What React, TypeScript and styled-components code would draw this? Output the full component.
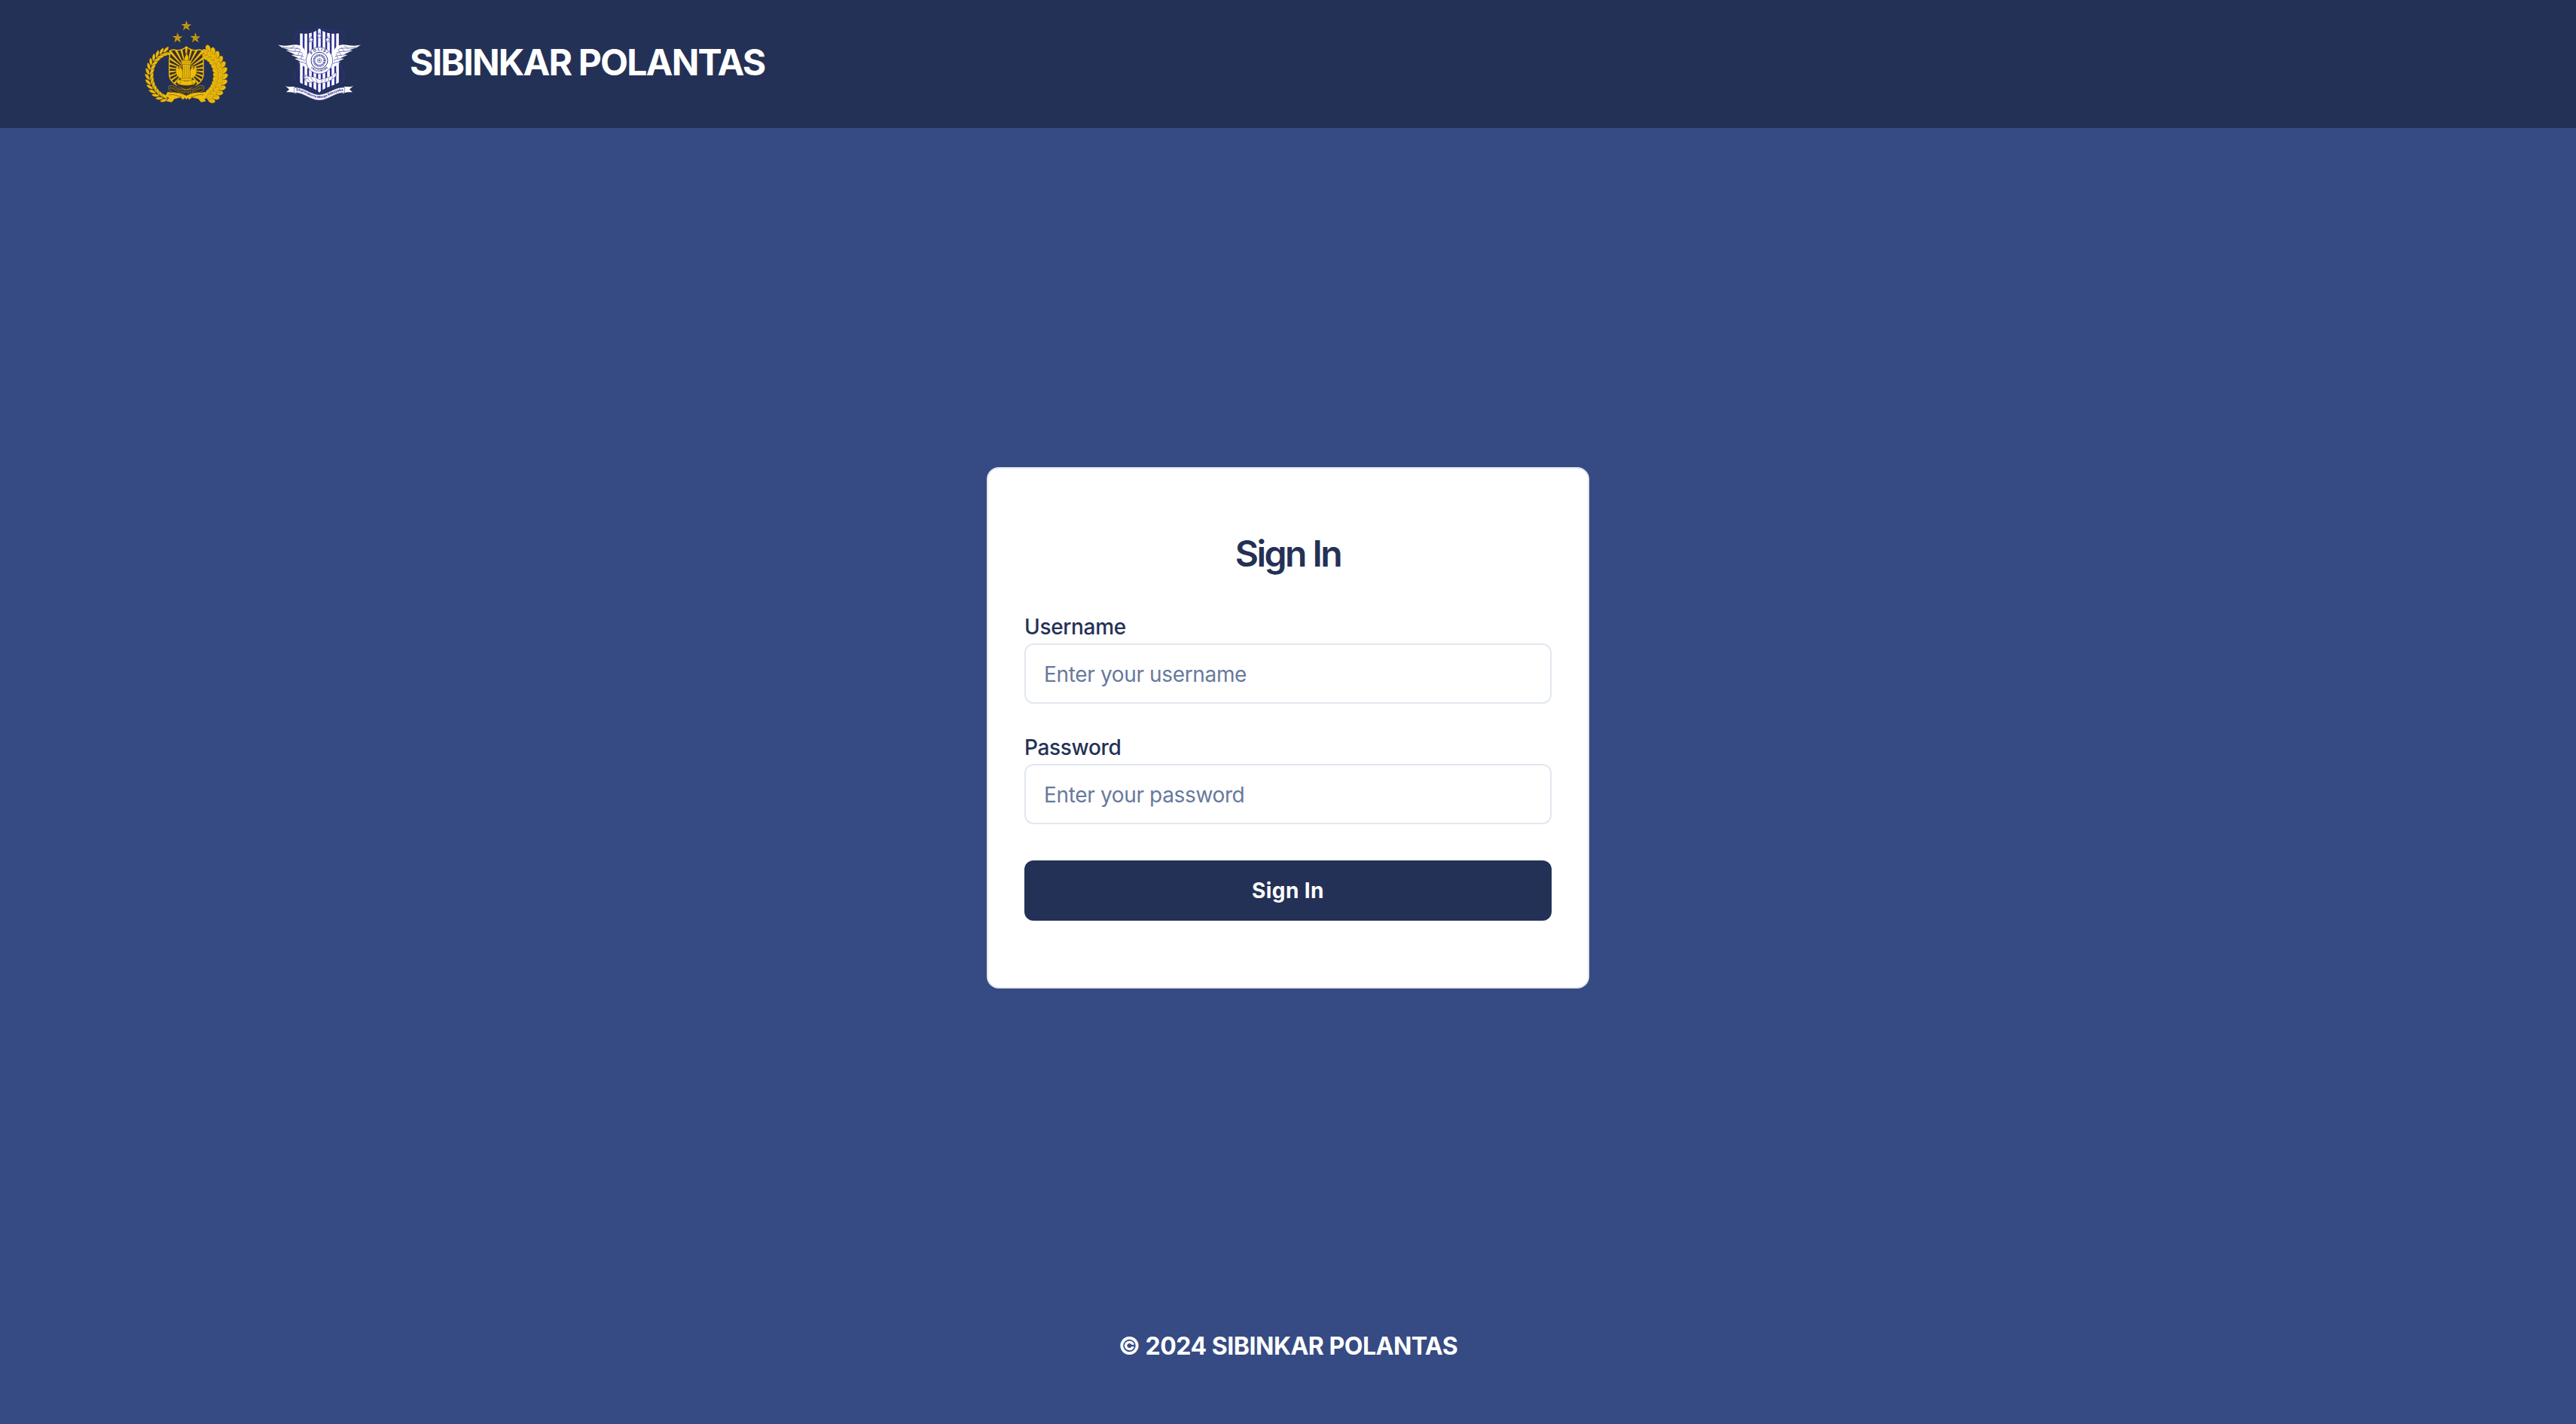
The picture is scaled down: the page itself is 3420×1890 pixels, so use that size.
import styled, { createGlobalStyle } from "styled-components";

const GOLD = "#eebb08";
const BRONZE = "#3a3029";
const INDIGO = "#2e3192";

const STAR = "M0-21 5-7 20-6 8 3 13 18 0 9-13 18-8 3-20-6-5-7Z";
const STAR_SHADE = "M0 0 0-21-5-7ZM0 0 20-6 5-7ZM0 0 13 18 8 3ZM0 0-13 18 0 9ZM0 0-20-6-8 3Z";
const POLRI_SHIELD = "M202 126C190 137 176 142 160 139C151 137 143 138 135 143C140 156 134 166 134 180V236C134 266 160 280 202 297C244 280 270 266 270 236V180C270 166 264 156 269 143C261 138 253 137 244 139C228 142 214 137 202 126Z";
const TRAFFIC_SHIELD = "M192 26C178 42 152 54 124 47C112 46 106 48 104 54C102 64 96 70 89 74C100 86 110 96 112 116V178C108 196 94 204 93 222C94 248 100 262 116 268C146 274 174 282 192 302C210 282 238 274 268 268C284 262 290 248 291 222C290 204 276 196 272 178V116C274 96 284 86 295 74C288 70 282 64 280 54C278 48 272 46 260 47C232 54 206 42 192 26Z";

// Leaf positions from the top of a wreath to its foot, each turned towards the tip
const placeLeaves = (cx: number, radius: number, from: number, step: number, count: number) =>
	Array.from({ length: count }, (_, i) => {
		const angle = ((from + i * step) * Math.PI) / 180;
		const dir = Math.sign(step);
		return {
			x: cx + radius * Math.cos(angle),
			y: 240 - 95 * Math.sin(angle),
			turn: (Math.atan2(dir * 95 * Math.cos(angle), dir * radius * Math.sin(angle)) * 180) / Math.PI,
		};
	});

const riceLeaves = placeLeaves(138, 82, 106, 11.8, 14);
const cottonLeaves = placeLeaves(262, 76, 70, -12.6, 12);

const PolriLogo = () => (
	<StyledLogo viewBox="36 18 336 336">
		<defs>
			<clipPath id="polriShield">
				<path d={POLRI_SHIELD} />
			</clipPath>
		</defs>
		{[[202, 43], [167, 91], [238, 91]].map(([x, y]) => (
			<g key={x} transform={`translate(${x} ${y})`}>
				<path d={STAR} fill={GOLD} />
				<path d={STAR_SHADE} fill={BRONZE} opacity=".55" />
			</g>
		))}
		{riceLeaves.map(({ x, y, turn }, i) => (
			<g key={i} transform={`translate(${x} ${y}) rotate(${turn})`} fill={GOLD} stroke={BRONZE} strokeWidth="1">
				<path d="M-5 0C-2-10 8-18 23-17C20-5 11 0-5 0Z" />
				<path d="M-5 0C-2 10 8 18 23 17C20 5 11 0-5 0Z" />
			</g>
		))}
		<path d="M268 136C290 133 306 144 318 160C336 180 350 208 352 236C352 272 338 300 312 318C298 328 284 332 274 334L270 320C282 308 292 298 300 286C308 268 316 254 314 238C312 210 302 188 288 174C278 164 268 152 268 136Z" fill={GOLD} />
		{cottonLeaves.map(({ x, y, turn }, i) => (
			<g key={i} transform={`translate(${x} ${y}) rotate(${turn})`} fill={GOLD} stroke="#94761a" strokeWidth="1.1">
				<path d="M-6-2C-8-16 0-30 14-30C24-22 18-6-6-2L12-20" />
				<path d="M-6 2C-8 16 0 29 14 29C24 22 18 6-6 2L12 19" />
				<path d="M-8 0C-2-12 12-13 24 0C12 13-2 12-8 0H14" />
			</g>
		))}
		<path d={POLRI_SHIELD} fill={BRONZE} stroke={GOLD} strokeWidth="4" />
		<g clipPath="url(#polriShield)" fill={GOLD}>
			{Array.from({ length: 26 }, (_, i) => (
				<path key={i} d="M-1-20-6-120H6L1-20Z" transform={`translate(202 218) rotate(${i * (360 / 26)})`} />
			))}
		</g>
		<path d="M160 274Q202 286 244 274L236 284 202 297 168 284Z" fill={BRONZE} />
		<path d="M196 182C186 172 204 164 200 150C214 164 214 172 208 182Z" fill={GOLD} stroke={BRONZE} strokeWidth="2" />
		<path d="M188 256C162 248 154 226 165 199L174 216 174 198 188 222ZM216 256C242 248 250 226 239 199L230 216 230 198 216 222Z" fill={GOLD} stroke={BRONZE} strokeWidth="1" />
		<g fill={GOLD} stroke="#7d6414" strokeWidth="1.5">
			<path d="M181 181H223L220 196H184Z" />
			<path d="M187 196H217V253H187Z" />
			<path d="M180 252H224V261H180Z" />
			<path d="M171 259C181 255 188 263 202 263S223 255 233 259V275Q202 285 171 275Z" />
			<circle cx="172" cy="265" r="8" />
			<circle cx="232" cy="265" r="8" />
			<path d="M194 200V250M202 200V250M210 200V250M184 188H220" fill="none" />
		</g>
		<path d="M134 282C146 278 158 284 166 292C184 300 220 300 238 292C246 284 258 278 270 282C276 290 272 300 262 305C240 315 228 305 202 322C176 305 164 315 142 305C132 300 128 290 134 282Z" fill={BRONZE} stroke={GOLD} strokeWidth="1.5" />
		<path d="M138 291C158 288 168 311 202 306C236 311 246 288 266 291" fill="none" stroke={GOLD} strokeWidth="7" strokeDasharray="3 2 2 3" opacity=".5" />
		<path d="M128 305C146 313 164 302 202 322C240 302 258 313 276 305L286 322 272 330 280 343 261 347 250 334 225 328 213 337 207 329 202 337 196 329 189 337 179 328 155 334 144 347 122 343 133 330 119 322Z" fill={GOLD} />
		<path d="M132 318C156 312 170 326 184 325M272 318C248 312 234 326 220 325" fill="none" stroke={BRONZE} strokeWidth="1.5" />
	</StyledLogo>
);

const TrafficWing = () => (
	<g>
		<path d="M26 103C52 112 78 104 98 103C116 104 128 112 134 126L146 146C140 164 144 184 156 202C140 194 136 190 132 190L118 184 126 181 108 173 118 170 94 159 107 156 80 144 94 142 60 126 72 124 43 114Z" fill="#fff" />
		<path d="M46 112C74 122 96 111 116 122M64 124C88 134 104 124 124 137M84 142C102 147 114 142 130 152M98 156C112 161 120 157 135 166M112 171C122 174 130 171 138 180" fill="none" stroke={INDIGO} strokeWidth="2" />
		<path d="M94 108C82 112 80 116 76 121M106 113C98 119 96 126 92 132M118 123C111 130 109 138 106 146M126 139C122 146 120 152 119 159" fill="none" stroke={INDIGO} strokeWidth="1.5" />
	</g>
);

const TrafficLogo = () => (
	<StyledLogo viewBox="24 3 336 336">
		<defs>
			<clipPath id="trafficShield">
				<path d="M192 38C174 54 148 62 112 58V250C116 262 174 272 192 294C210 272 268 262 272 250V58C236 62 210 54 192 38Z" />
			</clipPath>
			<path id="badgeTop" d="M154 165A38 38 0 0 1 230 165" />
			<path id="badgeBottom" d="M147 165A45 45 0 0 0 237 165" />
			<path id="mottoCurve" d="M94 288C122 281 158 316 192 316S262 281 292 288" />
		</defs>
		<path d={TRAFFIC_SHIELD} fill="#243156" stroke={INDIGO} strokeWidth="3" />
		<g clipPath="url(#trafficShield)">
			<path d="M112 30H272V300H112Z" fill={INDIGO} />
			{Array.from({ length: 9 }, (_, i) => (
				<rect key={i} x={115 + i * 18} y="30" width="10.5" height="270" fill="#fff" />
			))}
		</g>
		{[[192, 68], [159, 83], [225, 83]].map(([x, y]) => (
			<path key={x} d={STAR} transform={`translate(${x} ${y}) scale(.6)`} fill="#fff" stroke={INDIGO} strokeWidth="3" />
		))}
		<g fill="#fff" stroke={INDIGO} strokeWidth="1.5">
			<path d="M126 219L150 230 172 232 192 242 214 238 238 229 260 213 257 229 240 243 218 252 192 258 170 251 146 253 132 242 143 239 124 232 138 230Z" />
			<path d="M142 232L153 248M158 234L169 250M176 239L184 253M203 243L200 255M217 240L214 251M230 235L228 247M244 228L242 240" fill="none" />
		</g>
		<TrafficWing />
		<g transform="translate(384 0) scale(-1 1)">
			<TrafficWing />
		</g>
		<circle cx="192" cy="166" r="53" fill="#fff" stroke={INDIGO} strokeWidth="2" />
		<circle cx="192" cy="166" r="33" fill="#fff" stroke={INDIGO} strokeWidth="3" />
		<circle cx="192" cy="166" r="21" fill="none" stroke={INDIGO} strokeWidth="9" strokeDasharray="3 2.5" />
		<circle cx="192" cy="166" r="8" fill="#fff" stroke={INDIGO} strokeWidth="2" />
		<circle cx="192" cy="166" r="3" fill={INDIGO} />
		<StyledBadgeText>
			<textPath href="#badgeTop" startOffset="50%" textAnchor="middle">POLISI</textPath>
		</StyledBadgeText>
		<StyledBadgeText $small>
			<textPath href="#badgeBottom" startOffset="50%" textAnchor="middle">LALU LINTAS</textPath>
		</StyledBadgeText>
		<path d="M57 267C70 274 82 268 94 271V290L101 299C84 291 72 292 60 292L72 281ZM327 267C314 274 302 268 290 271V290L283 299C300 291 312 292 324 292L312 281Z" fill="#fff" />
		<path d="M91 274C126 268 158 303 192 302S258 268 293 274V294C260 290 226 324 192 324S124 290 91 294Z" fill="#fff" stroke={INDIGO} strokeWidth="1.5" />
		<StyledMotto>
			<textPath href="#mottoCurve" startOffset="50%" textAnchor="middle">Dharmakerta Marga Raksyaka</textPath>
		</StyledMotto>
	</StyledLogo>
);

const App = () => {
	return (
		<StyledPage>
			<GlobalStyle />
			<StyledHeader>
				<PolriLogo />
				<TrafficLogo />
				<StyledBrand>SIBINKAR POLANTAS</StyledBrand>
			</StyledHeader>
			<StyledMain>
				<StyledCard onSubmit={(event) => event.preventDefault()}>
					<StyledTitle>Sign In</StyledTitle>
					<StyledField>
						<StyledLabel htmlFor="username">Username</StyledLabel>
						<StyledInput id="username" placeholder="Enter your username" />
					</StyledField>
					<StyledField>
						<StyledLabel htmlFor="password">Password</StyledLabel>
						<StyledInput id="password" type="password" placeholder="Enter your password" />
					</StyledField>
					<StyledButton type="submit">Sign In</StyledButton>
				</StyledCard>
			</StyledMain>
			<StyledFooter>© 2024 SIBINKAR POLANTAS</StyledFooter>
		</StyledPage>
	);
};

export default App;

const GlobalStyle = createGlobalStyle`
	* {
		box-sizing: border-box;
	}

	body {
		margin: 0;
		font-family: Inter, sans-serif;
	}
`;

const StyledPage = styled.div`
	display: flex;
	flex-direction: column;
	height: 100vh;
	background: #364b83;
`;

const StyledHeader = styled.header`
	display: flex;
	align-items: center;
	gap: 64px;
	height: 170px;
	padding: 26px 192px 32px;
	background: #243156;
`;

const StyledLogo = styled.svg`
	flex: none;
	width: 112px;
	height: 112px;
`;

const StyledBadgeText = styled.text<{ $small?: boolean }>`
	fill: ${INDIGO};
	font-size: ${({ $small }) => ($small ? 11 : 15)}px;
	font-weight: 700;
	letter-spacing: ${({ $small }) => ($small ? 0.5 : 4)}px;
`;

const StyledMotto = styled.text`
	fill: ${INDIGO};
	font-size: 13.5px;
	font-weight: 700;
`;

const StyledBrand = styled.h1`
	margin: 0;
	padding-top: 1px;
	color: #fff;
	font-size: 48px;
	font-weight: 700;
	line-height: 64px;
	letter-spacing: -1.8px;
`;

const StyledMain = styled.main`
	display: flex;
	flex: 1;
	justify-content: center;
	align-items: flex-start;
	padding-top: 450px;
`;

const StyledCard = styled.form`
	display: flex;
	flex-direction: column;
	width: 800px;
	height: 692px;
	padding: 89px 48px 88px;
	border: 2px solid #e2e8f0;
	border-radius: 16px;
	background: #fff;
`;

const StyledTitle = styled.h2`
	margin: 0 0 59px;
	color: #243156;
	font-size: 48px;
	font-weight: 600;
	line-height: 48px;
	letter-spacing: -2.5px;
	text-align: center;
`;

const StyledField = styled.div`
	display: flex;
	flex-direction: column;
	gap: 8px;
	margin-bottom: 44px;
`;

const StyledLabel = styled.label`
	color: #243156;
	font-size: 28px;
	font-weight: 500;
	line-height: 28px;
	letter-spacing: -0.34px;
`;

const StyledInput = styled.input`
	width: 100%;
	height: 80px;
	padding: 2px 24px 0;
	border: 2px solid #e2e8f0;
	border-radius: 12px;
	outline: none;
	background: #fff;
	color: #243156;
	font-family: inherit;
	font-size: 28px;
	letter-spacing: -0.35px;

	&::placeholder {
		color: #68799c;
		opacity: 1;
	}
`;

const StyledButton = styled.button`
	height: 80px;
	margin-top: 4px;
	border: 0;
	border-radius: 12px;
	background: #243156;
	color: #fff;
	font-family: inherit;
	font-size: 28px;
	font-weight: 700;
	letter-spacing: 0.4px;
`;

const StyledFooter = styled.footer`
	padding-bottom: 79px;
	color: #fff;
	font-size: 32px;
	font-weight: 700;
	line-height: 48px;
	letter-spacing: -0.48px;
	text-align: center;
`;
